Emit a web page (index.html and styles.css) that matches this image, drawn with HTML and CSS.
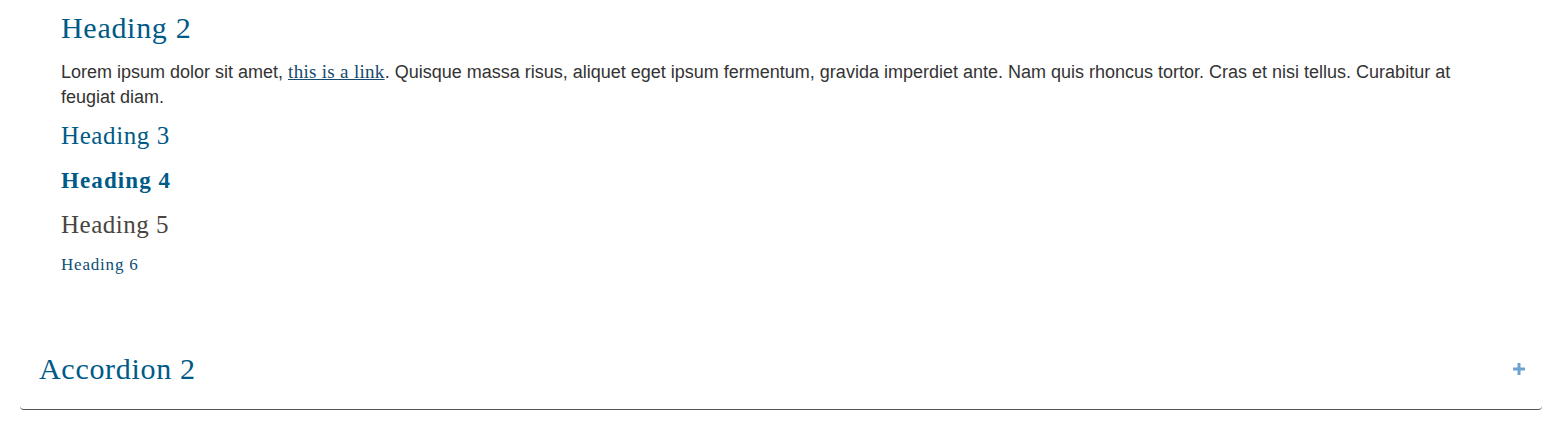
FILE: index.html
```html
<!DOCTYPE html>
<html>
<head>
<meta charset="utf-8">
<link rel="stylesheet" href="styles.css">
</head>
<body>
<div class="accordion">
  <div class="panel">
    <h2 class="h2">Heading 2</h2>
    <p class="text">Lorem ipsum dolor sit amet, <a class="link" href="#">this is a link</a>. Quisque massa risus, aliquet eget ipsum fermentum, gravida imperdiet ante. Nam quis rhoncus tortor. Cras et nisi tellus. Curabitur at feugiat diam.</p>
    <h3 class="h3">Heading 3</h3>
    <h4 class="h4">Heading 4</h4>
    <h5 class="h5">Heading 5</h5>
    <h6 class="h6">Heading 6</h6>
  </div>
  <div class="item">
    <button class="head">
      <span class="title">Accordion 2</span>
      <svg class="plus" width="14" height="14" viewBox="0 0 14 14"><path d="M7 1v12M1 7h12" stroke="#6fa3cf" stroke-width="3"/></svg>
    </button>
  </div>
</div>
</body>
</html>
```
FILE: styles.css
```css
html, body { margin: 0; padding: 0; background: #fff; }
body { padding: 0 17px 0 20px; }
.accordion { display: flex; flex-direction: column; }
.panel { padding: 8px 40px 0 41px; }
.h2, .h3, .h4, .h5, .h6 { font-family: "Liberation Serif", "DejaVu Serif", serif; font-weight: normal; margin: 0; }
.h2 { font-size: 30px; line-height: 40px; color: #005a87; margin-bottom: 12px; letter-spacing: 0.7px; }
.text { font-family: "Liberation Sans", Arial, sans-serif; font-size: 18px; line-height: 25px; color: #333; margin: 0 0 8px; }
.link { font-family: "Liberation Serif", serif; color: #154a6c; text-decoration: underline; font-size: 19px; line-height: 20px; letter-spacing: 0.3px; }
.h3 { font-size: 25px; line-height: 36px; color: #005a87; margin-bottom: 9px; letter-spacing: 0.6px; }
.h4 { font-size: 23px; line-height: 36px; font-weight: bold; color: #005a87; margin-bottom: 8px; letter-spacing: 1.1px; }
.h5 { font-size: 25px; line-height: 36px; color: #4a4540; margin-bottom: 8px; letter-spacing: 0.5px; }
.h6 { font-size: 17px; line-height: 28px; color: #0b4f76; letter-spacing: 0.8px; }
.item { margin-top: 56px; padding-bottom: 6px; border-bottom: 1px solid #555; border-radius: 0 0 4px 4px; }
.head { display: flex; width: 100%; align-items: center; justify-content: space-between; background: none; border: 0; padding: 0 16px 0 19px; height: 68px; cursor: pointer; }
.title { font-family: "Liberation Serif", serif; font-size: 30px; color: #005a87; letter-spacing: 0.7px; }
.plus { display: block; }
```
